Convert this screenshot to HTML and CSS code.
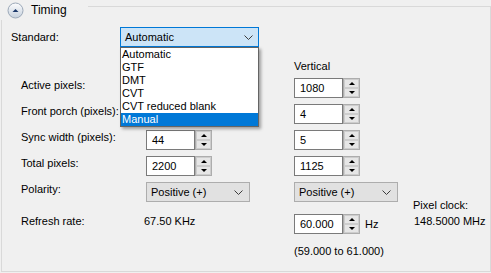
FILE: index.html
```html
<!DOCTYPE html>
<html lang="en">
<head>
    <meta charset="UTF-8">
    <title>Timing</title>
    <link rel="stylesheet" href="styles.css">
</head>
<body>
    <div class="group">
        <div class="group-head">
            <svg class="expander" viewBox="0 0 17 17">
                <defs>
                    <linearGradient id="expFill" x1="0" y1="0" x2="0" y2="1">
                        <stop offset="0" stop-color="#fdfdfe"/>
                        <stop offset="1" stop-color="#c5d0dd"/>
                    </linearGradient>
                </defs>
                <circle cx="8.5" cy="8.5" r="7.5" fill="url(#expFill)" stroke="#9ba8b8"/>
                <path d="M5.5 10 L8.5 7 L11.5 10 Z" fill="#1d3a6b"/>
            </svg>
            <span class="group-title">Timing</span>
        </div>

        <div class="standard-row">
            <span class="standard-label">Standard:</span>
            <div class="combo-wrap">
                <div class="combo focused">
                    <span>Automatic</span>
                    <svg class="chevron" viewBox="0 0 9 5"><polyline points="0.5,0.5 4.5,4.5 8.5,0.5"/></svg>
                </div>
                <ul class="dropdown">
                    <li>Automatic</li>
                    <li>GTF</li>
                    <li>DMT</li>
                    <li>CVT</li>
                    <li>CVT reduced blank</li>
                    <li class="selected">Manual</li>
                </ul>
            </div>
        </div>

        <div class="timing">
            <span></span>
            <span></span>
            <span class="col-head">Vertical</span>
            <span></span>

            <span class="label">Active pixels:</span>
            <span></span>
            <div class="spin"><span class="spin-value">1080</span><span class="spin-btns"><i class="up"></i><i class="down"></i></span></div>
            <span></span>

            <span class="label">Front porch (pixels):</span>
            <span></span>
            <div class="spin"><span class="spin-value">4</span><span class="spin-btns"><i class="up"></i><i class="down"></i></span></div>
            <span></span>

            <span class="label">Sync width (pixels):</span>
            <div class="spin"><span class="spin-value">44</span><span class="spin-btns"><i class="up"></i><i class="down"></i></span></div>
            <div class="spin"><span class="spin-value">5</span><span class="spin-btns"><i class="up"></i><i class="down"></i></span></div>
            <span></span>

            <span class="label">Total pixels:</span>
            <div class="spin"><span class="spin-value">2200</span><span class="spin-btns"><i class="up"></i><i class="down"></i></span></div>
            <div class="spin"><span class="spin-value">1125</span><span class="spin-btns"><i class="up"></i><i class="down"></i></span></div>
            <span></span>

            <span class="label">Polarity:</span>
            <div class="select">
                <span>Positive (+)</span>
                <svg class="chevron" viewBox="0 0 9 5"><polyline points="0.5,0.5 4.5,4.5 8.5,0.5"/></svg>
            </div>
            <div class="select">
                <span>Positive (+)</span>
                <svg class="chevron" viewBox="0 0 9 5"><polyline points="0.5,0.5 4.5,4.5 8.5,0.5"/></svg>
            </div>
            <div class="pixel-clock">
                <div>Pixel clock:</div>
                <div>148.5000 MHz</div>
            </div>

            <span class="label">Refresh rate:</span>
            <span class="rate">67.50 KHz</span>
            <div class="refresh">
                <div class="spin"><span class="spin-value">60.000</span><span class="spin-btns"><i class="up"></i><i class="down"></i></span></div>
                <span>Hz</span>
            </div>

            <span></span>
            <span></span>
            <span class="range">(59.000 to 61.000)</span>
        </div>
    </div>
</body>
</html>
```

FILE: styles.css
```css
* {
    margin: 0;
    padding: 0;
    box-sizing: border-box;
}

body {
    font-family: "Liberation Sans", Arial, sans-serif;
    font-size: 11px;
    line-height: 14px;
    color: #000;
    background: #f0f0f0;
}

.group {
    width: 490px;
    height: 266px;
    margin: 6px 0 0 1px;
    border: 1px solid #d9d9d9;
}

.group-head {
    display: flex;
    align-items: center;
    width: 88px;
    height: 20px;
    margin: -7px 0 0 -2px;
    padding-left: 7px;
    background: #f0f0f0;
}

.expander {
    width: 17px;
    height: 17px;
}

.group-title {
    margin-left: 7px;
    font-size: 12px;
}

.standard-row {
    display: flex;
    margin-top: 7px;
    padding-left: 9px;
}

.standard-label {
    width: 109px;
    line-height: 20px;
}

.combo-wrap {
    position: relative;
}

.combo {
    display: flex;
    align-items: center;
    justify-content: space-between;
    width: 139px;
    height: 20px;
    padding: 0 5px 0 4px;
    border: 1px solid #0078d7;
    background: #cce4f7;
}

.chevron {
    width: 9px;
    height: 5px;
    fill: none;
    stroke: #3c3c3c;
    stroke-width: 1;
}

.dropdown {
    position: absolute;
    left: 0;
    top: 20px;
    z-index: 2;
    width: 139px;
    list-style: none;
    border: 1px solid #646464;
    background: #fff;
    box-shadow: 2px 2px 3px rgba(0, 0, 0, 0.35);
}

.dropdown li {
    height: 13px;
    padding-left: 1px;
    line-height: 13px;
}

.dropdown li.selected {
    background: #0078d7;
    color: #fff;
}

.timing {
    display: grid;
    grid-template-columns: 125px 148px 119px 1fr;
    grid-template-rows: 12px 20px 20px 20px 20px 26px 20px 18px;
    row-gap: 6px;
    align-items: start;
    margin-top: 13px;
    padding-left: 19px;
}

.col-head {
    line-height: 13px;
}

.spin {
    display: flex;
    width: 66px;
    height: 20px;
}

.spin-value {
    width: 49px;
    padding-left: 5px;
    line-height: 18px;
    border: 1px solid #7a7a7a;
    background: #fff;
}

.spin-btns {
    display: flex;
    flex-direction: column;
    width: 17px;
    border: 1px solid #adadad;
    background: #e6e6e6;
}

.spin-btns i {
    flex: 1;
    display: flex;
    align-items: center;
    justify-content: center;
    border: 1px solid #cdcdcd;
}

.spin-btns i::before {
    content: "";
    border-left: 3px solid transparent;
    border-right: 3px solid transparent;
}

.spin-btns .up::before {
    border-bottom: 3px solid #000;
}

.spin-btns .down::before {
    border-top: 3px solid #000;
}

.select {
    display: flex;
    align-items: center;
    justify-content: space-between;
    width: 104px;
    height: 20px;
    padding: 0 6px 0 4px;
    border: 1px solid #adadad;
    background: #e1e1e1;
}

.pixel-clock {
    grid-row: span 2;
    padding-top: 15px;
    line-height: 16px;
}

.pixel-clock div:last-child {
    padding-left: 1px;
}

.rate {
    margin-left: -2px;
}

.refresh {
    display: flex;
    align-items: center;
    gap: 5px;
}

.range {
    align-self: end;
}
```
